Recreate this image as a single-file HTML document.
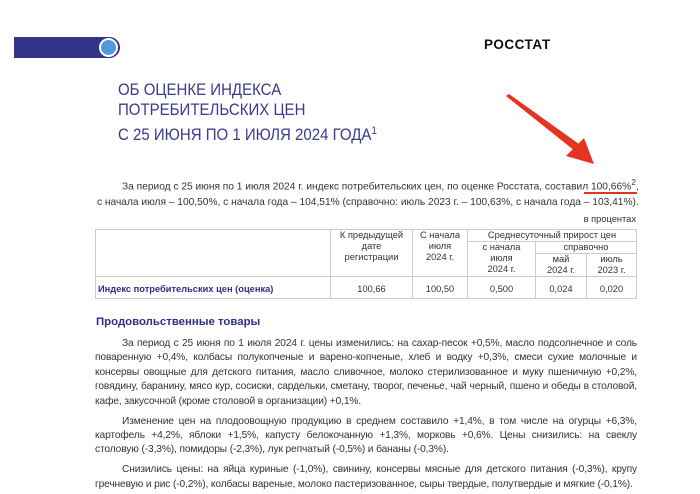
<!DOCTYPE html>
<html><head><meta charset="utf-8"><style>
body{margin:0;width:700px;height:494px;overflow:hidden;background:#fff;font-family:"Liberation Sans",Arial,sans-serif;color:#333;position:relative}
.a{position:absolute}
.t{color:#3a3a8c;font-size:16.5px;left:118px;line-height:20px;transform:scaleX(0.91);transform-origin:left}
p{margin:0}
.body{position:absolute;left:95px;width:542px;font-size:10.2px;line-height:14.4px;text-align:justify;color:#333;letter-spacing:-0.12px}
.body p{text-indent:27px}
table{border-collapse:collapse;font-size:9.3px;color:#333}
td{border:1px solid #ccc;text-align:center;vertical-align:top;padding:0;line-height:11px}
</style></head><body>
<div class="a" style="left:14px;top:37px;width:106px;height:21px;background:#33338a;border-radius:0 11px 11px 0"></div>
<div class="a" style="left:99px;top:38px;width:15px;height:15px;border:2px solid #fff;border-radius:50%;background:#4f9ad8"></div>
<div class="a" style="left:484px;top:37px;font-weight:bold;font-size:13.5px;color:#111;letter-spacing:.5px">РОССТАТ</div>
<div class="a t" style="top:80px">ОБ ОЦЕНКЕ ИНДЕКСА</div>
<div class="a t" style="top:100px">ПОТРЕБИТЕЛЬСКИХ ЦЕН</div>
<div class="a t" style="top:121px">С 25 ИЮНЯ ПО 1 ИЮЛЯ 2024 ГОДА<sup style="font-size:11px;vertical-align:6px">1</sup></div>
<svg class="a" style="left:500px;top:92px" width="110" height="80"><polygon points="6,4 9,2 86,57 80,63" fill="#e53323"/><polygon points="94,72 66,64 84,46" fill="#e53323"/></svg>
<div class="a" style="left:122px;top:177px;font-size:10.2px;color:#333">За период с 25 июня по 1 июля 2024 г. индекс потребительских цен, по оценке Росстата, составил 100,66%<sup style="font-size:8.5px">2</sup>,</div>
<div class="a" style="left:584px;top:192px;width:53px;height:2px;background:#e53323"></div>
<div class="a" style="left:97px;top:197px;font-size:10.2px;color:#333">с начала июля – 100,50%, с начала года – 104,51% (справочно: июль 2023 г. – 100,63%, с начала года – 103,41%).</div>
<div class="a" style="left:560px;top:214px;width:76px;text-align:right;font-size:9.3px">в процентах</div>
<table class="a" style="left:95px;top:229px;width:542px">
<tr><td rowspan="3" style="width:234px"></td><td rowspan="3" style="width:81px;height:46px">К предыдущей<br>дате<br>регистрации</td><td rowspan="3" style="width:54px">С начала<br>июля<br>2024 г.</td><td colspan="3">Среднесуточный прирост цен</td></tr>
<tr><td rowspan="2" style="width:67px">с начала<br>июля<br>2024 г.</td><td colspan="2">справочно</td></tr>
<tr><td style="width:50px">май<br>2024 г.</td><td>июль<br>2023 г.</td></tr>
<tr style="height:22px"><td style="text-align:left;color:#2e2e86;font-weight:bold;vertical-align:bottom;padding:0 0 3px 2px">Индекс потребительских цен (оценка)</td><td style="vertical-align:bottom;padding-bottom:3px">100,66</td><td style="vertical-align:bottom;padding-bottom:3px">100,50</td><td style="vertical-align:bottom;padding-bottom:3px">0,500</td><td style="vertical-align:bottom;padding-bottom:3px">0,024</td><td style="vertical-align:bottom;padding-bottom:3px">0,020</td></tr>
</table>
<div class="a" style="left:96px;top:316px;font-weight:bold;font-size:11.4px;color:#2e2e86">Продовольственные товары</div>
<div class="body" style="top:337px">
<p>За период с 25 июня по 1 июля 2024 г. цены изменились: на сахар-песок +0,5%, масло подсолнечное и соль поваренную +0,4%, колбасы полукопченые и варено-копченые, хлеб и водку +0,3%, смеси сухие молочные и консервы овощные для детского питания, масло сливочное, молоко стерилизованное и муку пшеничную +0,2%, говядину, баранину, мясо кур, сосиски, сардельки, сметану, творог, печенье, чай черный, пшено и обеды в столовой, кафе, закусочной (кроме столовой в организации) +0,1%.</p>
<p style="margin-top:5.6px">Изменение цен на плодоовощную продукцию в среднем составило +1,4%, в том числе на огурцы +6,3%, картофель +4,2%, яблоки +1,5%, капусту белокочанную +1,3%, морковь +0,6%. Цены снизились: на свеклу столовую (-3,3%), помидоры (-2,3%), лук репчатый (-0,5%) и бананы (-0,3%).</p>
<p style="margin-top:5.6px">Снизились цены: на яйца куриные (-1,0%), свинину, консервы мясные для детского питания (-0,3%), крупу гречневую и рис (-0,2%), колбасы вареные, молоко пастеризованное, сыры твердые, полутвердые и мягкие (-0,1%).</p>
</div>
</body></html>
